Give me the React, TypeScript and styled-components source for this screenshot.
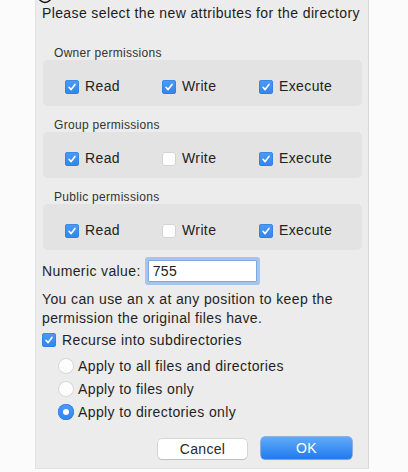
import React from "react";
import styled, { createGlobalStyle } from "styled-components";

const Global = createGlobalStyle`
  html, body { margin: 0; padding: 0; background: #fbfbfb; }
  body { font-family: "Liberation Sans", Arial, sans-serif; color: #1f1f1f; letter-spacing: 0.38px; }
`;

const Page = styled.div`
  position: relative;
  width: 408px;
  height: 472px;
  overflow: hidden;
`;

const Cursor = styled.svg`
  position: absolute;
  left: 36px;
  top: -12px;
`;

const Dialog = styled.div`
  margin-left: 35px;
  width: 334px;
  height: 469px;
  box-sizing: border-box;
  background: #ececec;
  border-left: 1px solid #e2e2e2;
  border-right: 1px solid #d9d9d9;
  border-bottom: 1px solid #e0e0e0;
  padding: 4px 6px 0 6px;
  display: flex;
  flex-direction: column;
`;

const Title = styled.div`
  font-size: 14px;
  line-height: 18px;
  color: #1c1c1c;
`;

const Section = styled.div<{ $first?: boolean }>`
  margin-top: ${(p) => (p.$first ? 23 : 11)}px;
  display: flex;
  flex-direction: column;
`;

const GroupLabel = styled.div`
  font-size: 12px;
  height: 15px;
  line-height: 17px;
  letter-spacing: 0.3px;
  color: #333;
  padding-left: 12px;
`;

const GroupBox = styled.div`
  margin-left: 1px;
  height: 46px;
  box-sizing: border-box;
  background: #e3e3e3;
  border-radius: 5px;
  padding: 19px 0 0 22px;
  display: grid;
  grid-template-columns: 97px 97px 97px;
  align-items: start;
`;

const CheckRow = styled.label<{ $gap?: number }>`
  display: flex;
  align-items: center;
  gap: ${(p) => p.$gap ?? 6}px;
  font-size: 14px;
  line-height: 15px;
  height: 15px;
  color: #222;
`;

const Box = styled.span<{ $on: boolean }>`
  width: 14px;
  height: 14px;
  box-sizing: border-box;
  border-radius: 3px;
  flex: none;
  display: flex;
  align-items: center;
  justify-content: center;
  background: ${(p) => (p.$on ? "linear-gradient(#4e9bf5, #2f84ee)" : "#fdfdfd")};
  box-shadow: ${(p) =>
    p.$on ? "inset 0 0 0 0.5px #2a78d8" : "inset 0 0 0 1px #d4d4d4"};
`;

const Check = ({ on }: { on: boolean }) => (
  <Box $on={on}>
    {on && (
      <svg width="10" height="10" viewBox="0 0 10 10">
        <path d="M2 5.3 L4.1 7.6 L8 2.4" fill="none" stroke="#fff" strokeWidth="1.6" strokeLinecap="round" strokeLinejoin="round" />
      </svg>
    )}
  </Box>
);

const NumericRow = styled.div`
  margin-top: 7px;
  display: flex;
  align-items: center;
  gap: 7px;
  font-size: 14px;
  color: #1f1f1f;
`;

const NumInput = styled.div`
  width: 109px;
  height: 22px;
  margin: 3px 0;
  box-sizing: border-box;
  background: #fff;
  border: 1px solid #7ea9df;
  box-shadow: 0 0 0 3px #a3c5ee;
  border-radius: 1px;
  padding-left: 4px;
  font-size: 14px;
  line-height: 20px;
  color: #222;
`;

const Note = styled.p`
  margin: 5px 0 0 0;
  font-size: 14px;
  line-height: 19px;
  color: #1f1f1f;
  width: 310px;
`;

const Recurse = styled.div`
  margin-top: 3px;
  height: 18px;
  display: flex;
  align-items: center;
`;

const RadioList = styled.div`
  margin-top: 5px;
  padding-left: 16px;
  display: flex;
  flex-direction: column;
`;

const RadioRow = styled.label`
  height: 23px;
  display: flex;
  align-items: center;
  gap: 4px;
  font-size: 14px;
  color: #1f1f1f;
`;

const Dot = styled.span<{ $on: boolean }>`
  width: 16px;
  height: 16px;
  border-radius: 50%;
  box-sizing: border-box;
  flex: none;
  display: flex;
  align-items: center;
  justify-content: center;
  background: ${(p) => (p.$on ? "linear-gradient(#4e9bf5, #2f84ee)" : "#fdfdfd")};
  box-shadow: ${(p) =>
    p.$on ? "inset 0 0 0 0.5px #2a78d8" : "inset 0 0 0 1px #d6d6d6"};
  &::after {
    content: "";
    display: ${(p) => (p.$on ? "block" : "none")};
    width: 6px;
    height: 6px;
    border-radius: 50%;
    background: #fff;
  }
`;

const Buttons = styled.div`
  margin-top: 14px;
  padding-right: 10px;
  display: flex;
  justify-content: flex-end;
  align-items: center;
  gap: 14px;
`;

const Button = styled.button<{ $primary?: boolean }>`
  font-family: "Liberation Sans", Arial, sans-serif;
  font-size: 14px;
  letter-spacing: 0.3px;
  border: none;
  border-radius: 4px;
  padding: 0;
  width: ${(p) => (p.$primary ? 91 : 89)}px;
  height: ${(p) => (p.$primary ? 22 : 20)}px;
  color: ${(p) => (p.$primary ? "#fff" : "#2a2a2a")};
  background: ${(p) => (p.$primary ? "linear-gradient(#62aaf8, #1f7bf0)" : "#ffffff")};
  box-shadow: ${(p) =>
    p.$primary
      ? "0 0 0 0.5px #2b79d6, 0 1px 1px rgba(0,0,0,0.12)"
      : "0 0 0 0.5px rgba(0,0,0,0.18), 0 1px 1px rgba(0,0,0,0.12)"};
  align-self: ${(p) => (p.$primary ? "flex-start" : "flex-end")};
`;

type Perm = { label: string; values: [boolean, boolean, boolean] };

const perms: Perm[] = [
  { label: "Owner permissions", values: [true, true, true] },
  { label: "Group permissions", values: [true, false, true] },
  { label: "Public permissions", values: [true, false, true] },
];

const names = ["Read", "Write", "Execute"];

export default function App() {
  return (
    <Page>
      <Global />
      <Dialog>
        <Title>Please select the new attributes for the directory</Title>
        {perms.map((p, i) => (
          <Section key={p.label} $first={i === 0}>
            <GroupLabel>{p.label}</GroupLabel>
            <GroupBox>
              {names.map((n, j) => (
                <CheckRow key={n}>
                  <Check on={p.values[j]} />
                  {n}
                </CheckRow>
              ))}
            </GroupBox>
          </Section>
        ))}
        <NumericRow>
          Numeric value:
          <NumInput>755</NumInput>
        </NumericRow>
        <Note>
          You can use an x at any position to keep the permission the original files have.
        </Note>
        <Recurse>
          <CheckRow $gap={6}>
            <Check on={true} />
            Recurse into subdirectories
          </CheckRow>
        </Recurse>
        <RadioList>
          <RadioRow>
            <Dot $on={false} />
            Apply to all files and directories
          </RadioRow>
          <RadioRow>
            <Dot $on={false} />
            Apply to files only
          </RadioRow>
          <RadioRow>
            <Dot $on={true} />
            Apply to directories only
          </RadioRow>
        </RadioList>
        <Buttons>
          <Button>Cancel</Button>
          <Button $primary>OK</Button>
        </Buttons>
      </Dialog>
      <Cursor width="18" height="18" viewBox="0 0 18 18">
        <circle cx="9" cy="8" r="6.5" fill="none" stroke="#111" strokeWidth="1.4" />
      </Cursor>
    </Page>
  );
}
